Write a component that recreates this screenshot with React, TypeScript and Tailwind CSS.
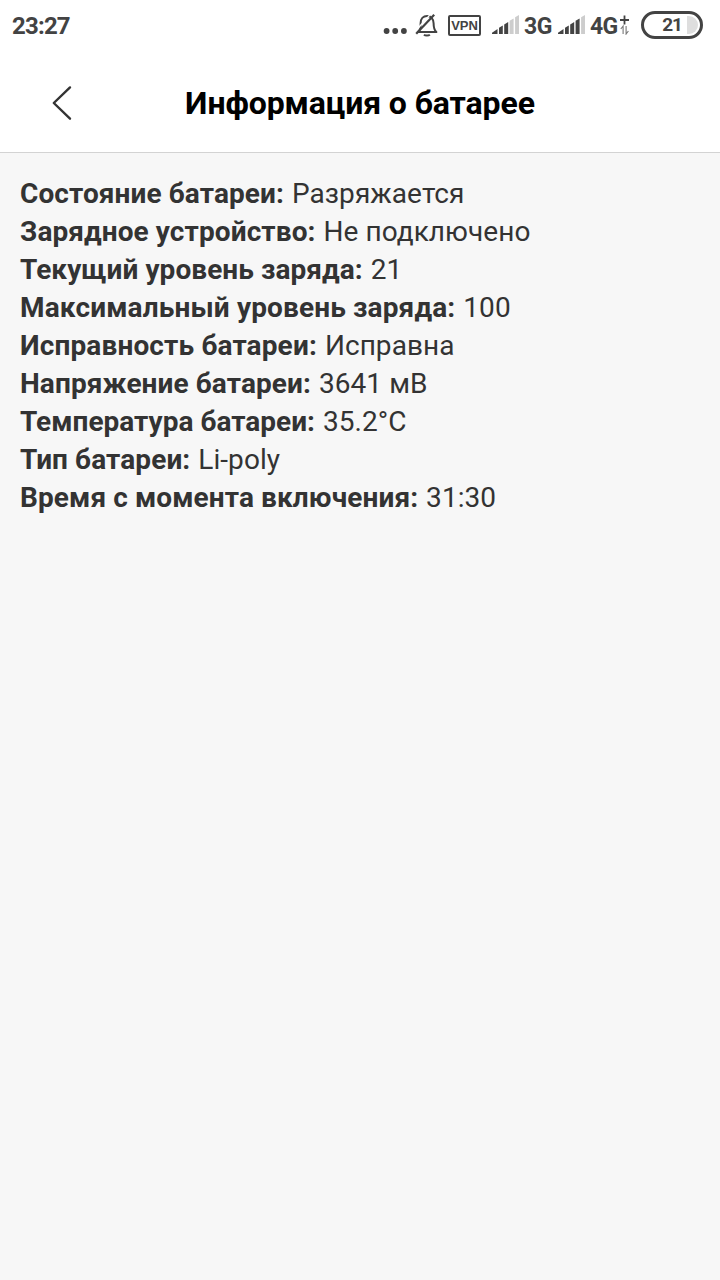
const details = [
  { label: "Состояние батареи", value: "Разряжается", tracking: "tracking-[0.1px]" },
  { label: "Зарядное устройство", value: "Не подключено", tracking: "tracking-[0.1px]" },
  { label: "Текущий уровень заряда", value: "21", tracking: "tracking-[0.06px]" },
  { label: "Максимальный уровень заряда", value: "100", tracking: "tracking-[0.14px]" },
  { label: "Исправность батареи", value: "Исправна", tracking: "tracking-[0.14px]" },
  { label: "Напряжение батареи", value: "3641 мВ", tracking: "tracking-[0.1px]" },
  { label: "Температура батареи", value: "35.2°C", tracking: "tracking-[0.02px]" },
  { label: "Тип батареи", value: "Li-poly", tracking: "tracking-[0.1px]" },
  { label: "Время с момента включения", value: "31:30", tracking: "tracking-[0.1px]" },
];

const bars = [
  "M0 19 V17.8 L5.5 14 V19 Z",
  "M7 19 V12.8 L10.8 10.4 V19 Z",
  "M12.2 19 V9.4 L16.2 7 V19 Z",
  "M17.6 19 V5.8 L21.6 3.4 V19 Z",
  "M23.1 19 V2.2 L27 0 V19 Z",
];

function Signal({ level }: { level: number }) {
  return (
    <svg className="block h-[19px] w-[27px] shrink-0" viewBox="0 0 27 19">
      {bars.map((d, i) => (
        <path key={d} d={d} fill={i < level ? "#434343" : "#cdcdcd"} />
      ))}
    </svg>
  );
}

function MutedBell() {
  return (
    <svg className="ml-[8px] mt-[-2px] block h-[24px] w-[23px] shrink-0" viewBox="0 0 23 24" fill="none" stroke="#434343" strokeWidth="2">
      <path d="M2.7 19 C5.6 17 5.6 14.5 5.6 10.2 C5.6 6 8.2 3 12.1 3 C16 3 18.6 6.2 18.6 10.2 C18.6 14.5 19 17 21.4 19 Z" strokeLinejoin="round" />
      <path d="M9 21.6 C10.1 22.9 13.7 22.9 14.8 21.6" />
      <path d="M3.2 15 L14.7 2.1" stroke="white" strokeWidth="1.4" />
      <path d="M1.2 20.8 L19.2 1.8" strokeWidth="2.2" />
    </svg>
  );
}

function StatusBar() {
  return (
    <div className="flex h-[52px] w-full items-center pl-[12px] pr-[17px] font-bold text-[#434343]">
      <p className="text-[24px] leading-[52px] tracking-[-0.8px]">23:27</p>
      <div className="ml-auto flex items-center">
        <svg className="mt-[10px] block h-[6px] w-[24px]" viewBox="0 0 24 6" fill="#434343">
          <circle cx="3.6" cy="3" r="2.9" />
          <circle cx="12.2" cy="3" r="2.9" />
          <circle cx="20.9" cy="3" r="2.9" />
        </svg>
        <MutedBell />
        <div className="ml-[10px] mt-[-2px] flex h-[21px] w-[33px] items-center justify-center rounded-[2px] border-2 border-[#434343] font-['Liberation_Sans',sans-serif] text-[13px] leading-[17px]">VPN</div>
        <div className="ml-[11px] mt-[-3px]"><Signal level={3} /></div>
        <p className="ml-[5px] mt-[2px] w-[28px] text-[23px] leading-[50px] tracking-[-0.4px]">3G</p>
        <div className="ml-[6px] mt-[-3px]"><Signal level={4} /></div>
        <p className="ml-[5px] mt-[2px] w-[28px] text-[23px] leading-[50px] tracking-[-0.6px]">4G</p>
        <svg className="ml-[2px] mt-[-2px] block h-[20px] w-[9px]" viewBox="0 0 9 20" fill="none">
          <path d="M0 5 H9 M4.5 0.5 V9.5" stroke="#434343" strokeWidth="1.8" />
          <path d="M3.1 19 V11 L0.8 14 M6.1 11 V19 L8.4 16" stroke="#777" strokeWidth="1.1" />
        </svg>
        <div className="ml-[12px] mt-[-2px] flex h-[28px] w-[62px] rounded-full border-[3px] border-[#434343] p-[2px]">
          <div className="flex w-full items-center justify-center rounded-full bg-[linear-gradient(to_right,white_41px,#dedede_41px)] text-[19px] leading-[22px] tracking-[-1.2px]">21</div>
        </div>
      </div>
    </div>
  );
}

export default function App() {
  return (
    <div className="flex h-screen w-full flex-col overflow-hidden bg-[#f7f7f7] font-['Roboto',sans-serif]">
      <header className="shrink-0 border-b border-[#d3d3d3] bg-white">
        <StatusBar />
        <div className="grid h-[100px] grid-cols-[120px_1fr_120px] items-center">
          <button className="ml-[50px] w-[24px]" aria-label="Назад">
            <svg className="block h-[36px] w-[24px]" viewBox="0 0 24 36" fill="none">
              <path d="M20 2.4 L3.8 18 L20 33.7" stroke="#333" strokeWidth="2.4" strokeLinecap="round" strokeLinejoin="round" />
            </svg>
          </button>
          <h1 className="whitespace-nowrap text-center text-[32px] font-bold leading-[102px] tracking-[-0.1px] text-black">Информация о батарее</h1>
        </div>
      </header>
      <main className="px-[20px] pt-[22px] text-[28px] leading-[38px] text-[#333]">
        {details.map(({ label, value, tracking }) => (
          <p key={label} className="whitespace-nowrap">
            <b className={tracking}>{label}:</b> <span className="ml-px tracking-[0.06px]">{value}</span>
          </p>
        ))}
      </main>
    </div>
  );
}
